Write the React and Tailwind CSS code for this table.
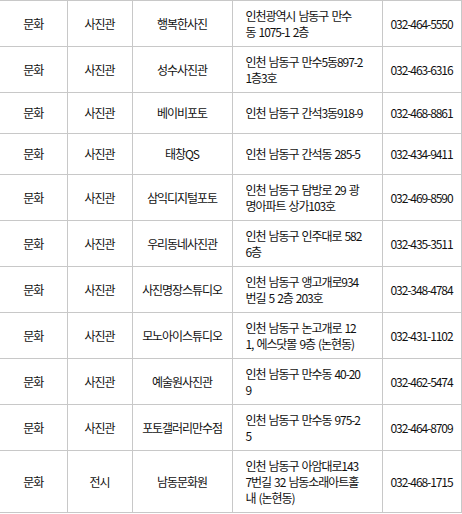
const rows = [
  ["문화", "사진관", "행복한사진", ["인천광역시 남동구 만수", "동 1075-1 2층"], "032-464-5550"],
  ["문화", "사진관", "성수사진관", ["인천 남동구 만수5동897-2", "1층3호"], "032-463-6316"],
  ["문화", "사진관", "베이비포토", ["인천 남동구 간석3동918-9"], "032-468-8861"],
  ["문화", "사진관", "태창QS", ["인천 남동구 간석동 285-5"], "032-434-9411"],
  ["문화", "사진관", "삼익디지털포토", ["인천 남동구 담방로 29 광", "명아파트 상가103호"], "032-469-8590"],
  ["문화", "사진관", "우리동네사진관", ["인천 남동구 인주대로 582", "6층"], "032-435-3511"],
  ["문화", "사진관", "사진명장스튜디오", ["인천 남동구 앵고개로934", "번길 5 2층 203호"], "032-348-4784"],
  ["문화", "사진관", "모노아이스튜디오", ["인천 남동구 논고개로 12", "1, 에스닷몰 9층 (논현동)"], "032-431-1102"],
  ["문화", "사진관", "예술원사진관", ["인천 남동구 만수동 40-20", "9"], "032-462-5474"],
  ["문화", "사진관", "포토갤러리만수점", ["인천 남동구 만수동 975-2", "5"], "032-464-8709"],
  ["문화", "전시", "남동문화원", ["인천 남동구 아암대로143", "7번길 32 남동소래아트홀", "내 (논현동)"], "032-468-1715"],
];

const cell = "border-r border-b border-[#c8c8c8] py-[6.5px] leading-[16px] align-middle whitespace-nowrap";

export default function App() {
  return (
    <div
      className="bg-white text-[#111] text-[12px] tracking-[-0.09em] [word-spacing:1.5px]"
      style={{ fontFamily: '"Noto Sans CJK KR", "Noto Sans", sans-serif' }}
    >
      <table className="table-fixed border-collapse w-[461px] border-t border-[#c8c8c8]">
        <colgroup>
          <col className="w-[67px]" />
          <col className="w-[65px]" />
          <col className="w-[100px]" />
          <col className="w-[150px]" />
          <col className="w-[79px]" />
        </colgroup>
        <tbody>
          {rows.map((r, i) => (
            <tr key={i} className="h-[41px]">
              <td className={`${cell} text-center`}>{r[0]}</td>
              <td className={`${cell} text-center`}>{r[1]}</td>
              <td className={`${cell} text-center`}>{r[2]}</td>
              <td className={`${cell} text-left pl-[13px] pr-2`}>
                {r[3].map((line, j) => (
                  <div key={j}>{line}</div>
                ))}
              </td>
              <td className={`${cell} text-center`}>{r[4]}</td>
            </tr>
          ))}
        </tbody>
      </table>
    </div>
  );
}
